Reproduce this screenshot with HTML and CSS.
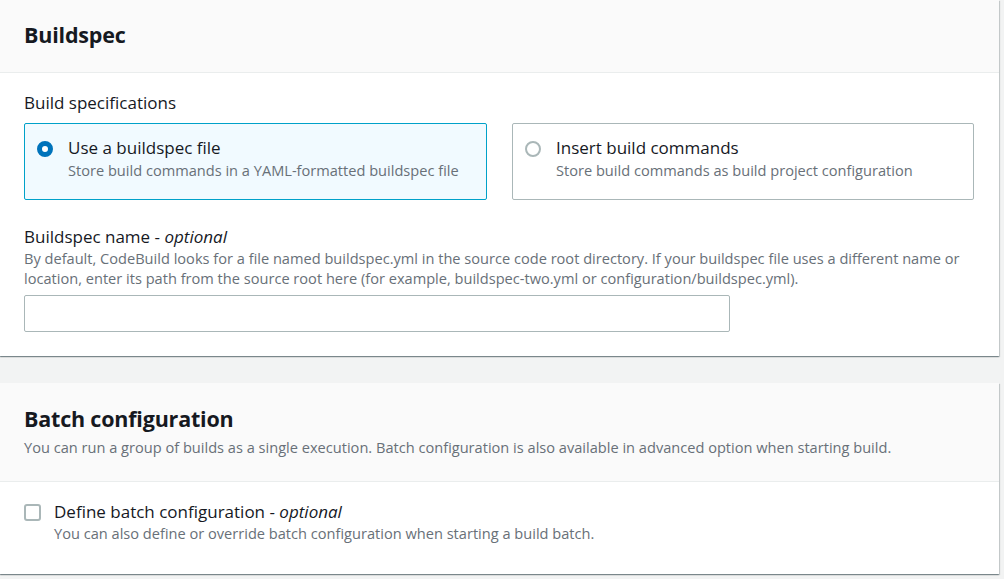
FILE: index.html
```html
<!DOCTYPE html>
<html lang="en">
<head>
<meta charset="utf-8">
<title>Buildspec</title>
<link rel="stylesheet" href="styles.css">
</head>
<body>
<div class="page">
  <section class="card">
    <header class="card-header">
      <h2 class="card-title">Buildspec</h2>
    </header>
    <div class="card-body">
      <div class="field-label">Build specifications</div>
      <div class="tiles">
        <label class="tile tile-selected">
          <span class="radio radio-on"></span>
          <span class="tile-text">
            <span class="tile-title">Use a buildspec file</span>
            <span class="tile-desc">Store build commands in a YAML-formatted buildspec file</span>
          </span>
        </label>
        <label class="tile">
          <span class="radio"></span>
          <span class="tile-text">
            <span class="tile-title">Insert build commands</span>
            <span class="tile-desc">Store build commands as build project configuration</span>
          </span>
        </label>
      </div>
      <div class="field">
        <div class="field-label-2">Buildspec name - <i>optional</i></div>
        <div class="field-desc">By default, CodeBuild looks for a file named buildspec.yml in the source code root directory. If your buildspec file uses a different name or location, enter its path from the source root here (for example, buildspec-two.yml or configuration/buildspec.yml).</div>
        <div class="input"></div>
      </div>
    </div>
  </section>

  <section class="card card-2">
    <header class="card-header header-2">
      <h2 class="card-title">Batch configuration</h2>
      <p class="header-desc">You can run a group of builds as a single execution. Batch configuration is also available in advanced option when starting build.</p>
    </header>
    <div class="card-body body-2">
      <label class="check-row">
        <span class="checkbox"></span>
        <span class="tile-text">
          <span class="tile-title">Define batch configuration - <i>optional</i></span>
          <span class="tile-desc check-desc">You can also define or override batch configuration when starting a build batch.</span>
        </span>
      </label>
    </div>
  </section>
</div>
</body>
</html>
```

FILE: styles.css
```css
html, body {
  margin: 0;
  padding: 0;
}
body {
  background: #f2f3f3;
  font-family: "Open Sans", "Liberation Sans", sans-serif;
  color: #16191f;
  font-size: 14.6px;
}
.page {
  width: 999px;
  padding-bottom: 10px;
}
.card {
  background: #ffffff;
  box-shadow: 0 1px 1px 0 rgba(0, 28, 36, 0.3), 1px 1px 1px 0 rgba(0, 28, 36, 0.15), -1px 1px 1px 0 rgba(0, 28, 36, 0.15);
}
.card-2 {
  margin-top: 27px;
}
.card-header {
  background: #fafafa;
  border-bottom: 1px solid #eaeded;
  height: 73px;
  box-sizing: border-box;
  padding: 21px 24px 0;
}
.card-title {
  margin: 0;
  font-size: 21.5px;
  line-height: 28px;
  font-weight: 700;
  letter-spacing: -0.2px;
}
.card-body {
  padding: 19px 24px 24px;
}
.field-label {
  font-size: 17px;
  line-height: 22px;
  margin-bottom: 9px;
}
.tiles {
  display: grid;
  grid-template-columns: 463px 462px;
  gap: 25px;
}
.tile {
  display: flex;
  align-items: flex-start;
  border: 1px solid #aab7b8;
  border-radius: 2px;
  padding: 13px 12px 16px;
  height: 77px;
  box-sizing: border-box;
  gap: 15px;
}
.tile-selected {
  border-color: #00a1c9;
  background: #f1faff;
}
.radio {
  flex: none;
  width: 16px;
  height: 16px;
  box-sizing: border-box;
  border: 2px solid #aab7b8;
  border-radius: 50%;
  margin-top: 4px;
  background: #fff;
}
.radio-on {
  border: 5px solid #0073bb;
}
.tile-text {
  display: flex;
  flex-direction: column;
}
.tile-title {
  font-size: 17px;
  line-height: 22px;
}
.tile-desc {
  font-size: 14.6px;
  line-height: 22px;
  color: #687078;
}
.field {
  margin-top: 26px;
}
.field-label-2 {
  font-size: 17px;
  line-height: 22px;
}
.field-desc {
  font-size: 14.6px;
  line-height: 20px;
  color: #687078;
}
.input {
  margin-top: 7px;
  width: 706px;
  height: 37px;
  box-sizing: border-box;
  border: 1px solid #aab7b8;
  border-radius: 2px;
  background: #fff;
}
.header-2 {
  height: 99px;
  padding-top: 22px;
}
.header-desc {
  margin: 4px 0 0;
  font-size: 14.6px;
  line-height: 20px;
  color: #687078;
}
.body-2 {
  padding: 19px 24px 30px;
}
.check-row {
  display: flex;
  align-items: flex-start;
  gap: 13px;
}
.check-desc {
  margin-top: -1px;
}
.checkbox {
  flex: none;
  width: 17px;
  height: 17px;
  box-sizing: border-box;
  border: 2px solid #aab7b8;
  border-radius: 3px;
  margin-top: 3px;
  background: #fff;
}
```
